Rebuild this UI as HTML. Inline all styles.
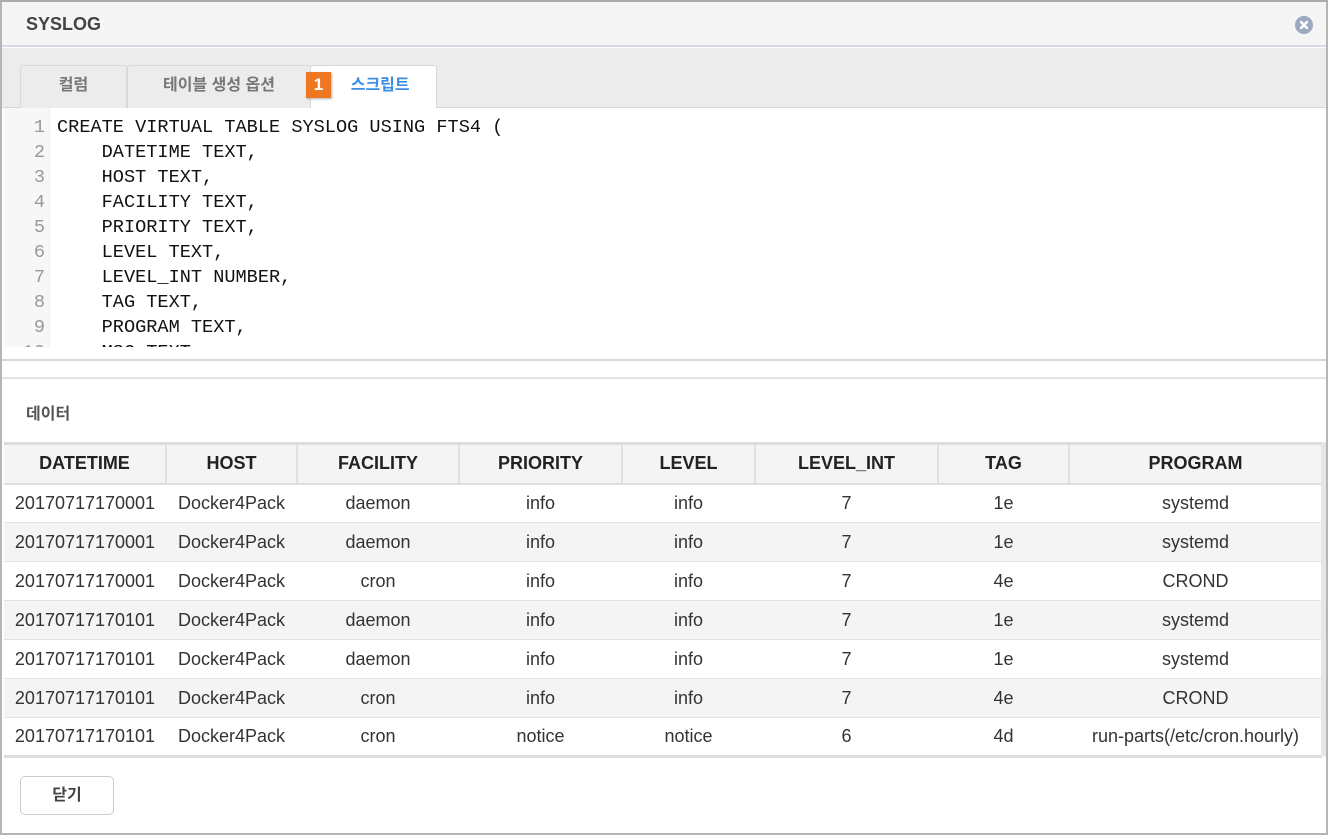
<!DOCTYPE html>
<html><head><meta charset="utf-8"><style>
*{margin:0;padding:0;box-sizing:border-box}
body{width:1328px;height:835px;background:#fff;font-family:"Liberation Sans","Noto Sans CJK KR",sans-serif;position:relative;overflow:hidden;color:#333}
.frame{position:absolute;left:0;top:0;width:1328px;height:835px;border:2px solid #b5b5b5;border-top-color:#aaa}
.title{position:absolute;left:2px;top:2px;width:1324px;height:45px;background:#f5f5f5;border-bottom:2px solid #d5dae2}
.title span{position:absolute;left:24px;top:12px;font-weight:bold;font-size:18px;color:#444}
.close{position:absolute;left:1295px;top:16px;width:18px;height:18px;border-radius:50%;background:#9aa8c0}
.tabs{position:absolute;left:2px;top:48px;width:1324px;height:60px;background:#ececec;border-bottom:1px solid #d5d5d5}
.tab{position:absolute;top:17px;height:43px;border:1px solid #d8d8d8;border-bottom:none;background:#ececec;font-size:16px;font-weight:bold;color:#777;text-align:center;line-height:40px;border-radius:3px 3px 0 0}
.badge{position:absolute;left:306px;top:72px;width:25px;height:26px;background:#ee7722;color:#fff;font-weight:bold;font-size:17px;text-align:center;line-height:26px;box-shadow:1px 1px 2px rgba(0,0,0,.3)}
.editor{position:absolute;left:2px;top:108px;width:1324px;height:253px;background:#fff;border-bottom:2px solid #d5dae2}
.clip{position:absolute;left:0;top:0;width:1324px;height:239px;overflow:hidden}
.gutter{position:absolute;left:2px;top:0;width:46px;height:239px;background:#f7f7f7;border-right:1px solid #eee}
.ln,.code{position:absolute;top:7px;font-family:"Liberation Mono",monospace;font-size:18.6px;line-height:25px;white-space:pre}
.ln{left:2px;width:41px;text-align:right;color:#999}
.code{left:55px;color:#111}
.sep{position:absolute;left:2px;top:377px;width:1324px;height:2px;background:#e3e3e3}
.data{position:absolute;left:26px;top:400px;font-size:16px;font-weight:bold;color:#555}
table{position:absolute;left:4px;top:442px;border-collapse:collapse;width:1318px;font-size:18px;table-layout:fixed;border-top:3px solid #ddd;border-bottom:3px solid #ddd}
th{height:40px;background:#f4f4f4;font-weight:bold;color:#222;border-right:2px solid #e0e0e0;border-bottom:2px solid #e0e0e0}
td{height:39px;text-align:center;border-bottom:1px solid #e2e2e2;color:#333;white-space:nowrap;background:#fff}
tr:nth-child(odd) td{background:#f4f4f4}
.vsb{position:absolute;left:1321px;top:442px;width:5px;height:314px;background:#e6e6e6}
.btn{position:absolute;left:20px;top:776px;width:94px;height:39px;border:1px solid #ccc;border-radius:5px;background:#fff;font-size:16px;font-weight:bold;color:#444;text-align:center;line-height:37px}
</style></head><body>
<div class="frame"></div>
<div class="title"><span>SYSLOG</span></div>
<div class="close"><svg width="18" height="18" viewBox="0 0 18 18"><path d="M6 6L12 12M12 6L6 12" stroke="#fff" stroke-width="2.5" stroke-linecap="round"/></svg></div>
<div class="tabs">
<div class="tab" style="left:18px;width:107px">컬럼</div>
<div class="tab" style="left:125px;width:184px">테이블 생성 옵션</div>
<div class="tab" style="left:308px;width:127px;background:#fff;color:#3a8ee6;height:44px">&nbsp;&nbsp;&nbsp;스크립트</div>
</div>
<div class="badge">1</div>
<div class="editor"><div class="clip">
<div class="gutter"></div>
<div class="ln">1
2
3
4
5
6
7
8
9
10</div>
<div class="code">CREATE VIRTUAL TABLE SYSLOG USING FTS4 (
    DATETIME TEXT,
    HOST TEXT,
    FACILITY TEXT,
    PRIORITY TEXT,
    LEVEL TEXT,
    LEVEL_INT NUMBER,
    TAG TEXT,
    PROGRAM TEXT,
    MSG TEXT</div>
</div></div>
<div class="sep"></div>
<div class="data">데이터</div>
<table>
<colgroup><col style="width:162px"><col style="width:131px"><col style="width:162px"><col style="width:163px"><col style="width:133px"><col style="width:183px"><col style="width:131px"><col style="width:253px"></colgroup>
<tr><th>DATETIME</th><th>HOST</th><th>FACILITY</th><th>PRIORITY</th><th>LEVEL</th><th>LEVEL_INT</th><th>TAG</th><th>PROGRAM</th></tr>
<tr><td>20170717170001</td><td>Docker4Pack</td><td>daemon</td><td>info</td><td>info</td><td>7</td><td>1e</td><td>systemd</td></tr>
<tr><td>20170717170001</td><td>Docker4Pack</td><td>daemon</td><td>info</td><td>info</td><td>7</td><td>1e</td><td>systemd</td></tr>
<tr><td>20170717170001</td><td>Docker4Pack</td><td>cron</td><td>info</td><td>info</td><td>7</td><td>4e</td><td>CROND</td></tr>
<tr><td>20170717170101</td><td>Docker4Pack</td><td>daemon</td><td>info</td><td>info</td><td>7</td><td>1e</td><td>systemd</td></tr>
<tr><td>20170717170101</td><td>Docker4Pack</td><td>daemon</td><td>info</td><td>info</td><td>7</td><td>1e</td><td>systemd</td></tr>
<tr><td>20170717170101</td><td>Docker4Pack</td><td>cron</td><td>info</td><td>info</td><td>7</td><td>4e</td><td>CROND</td></tr>
<tr><td>20170717170101</td><td>Docker4Pack</td><td>cron</td><td>notice</td><td>notice</td><td>6</td><td>4d</td><td>run-parts(/etc/cron.hourly)</td></tr>
</table>
<div class="vsb"></div>
<div class="btn">닫기</div>
</body></html>
